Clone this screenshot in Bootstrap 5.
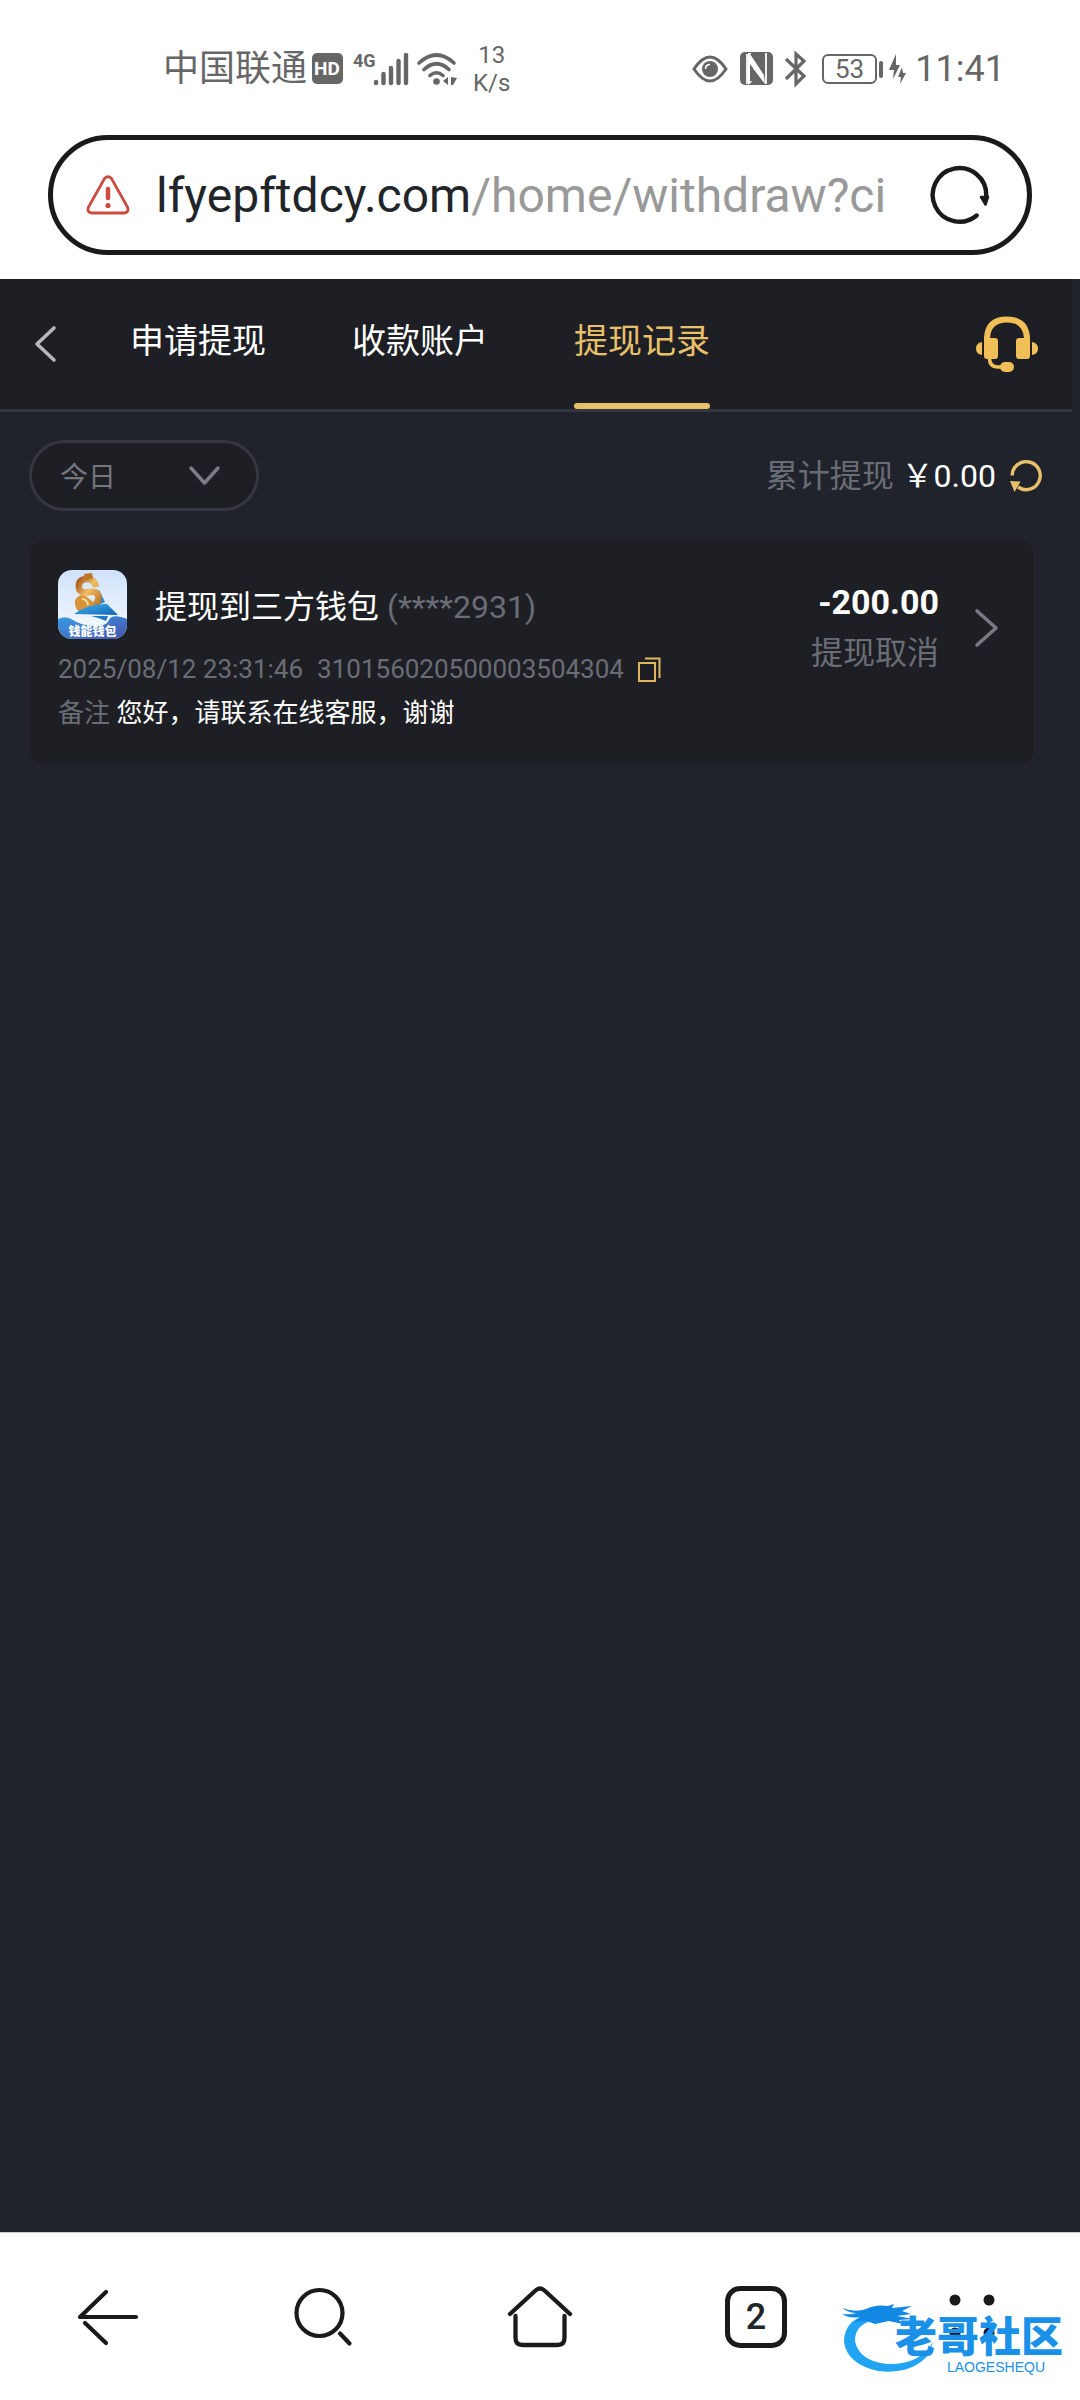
<!DOCTYPE html>
<html lang="zh-CN">
<head>
<meta charset="utf-8">
<meta name="viewport" content="width=device-width, initial-scale=1">
<title>提现记录</title>
<link href="https://cdn.jsdelivr.net/npm/bootstrap@5.3.0/dist/css/bootstrap.min.css" rel="stylesheet">
<style>
:root{--ink:#1a1a1a;--panel:#1e1f24;--page:#20232c;--line:#343741;--gold:#e9c06a;--dim:#6a6d75;--sys:#666}
body{font-family:Roboto,"Noto Sans CJK SC",sans-serif;background:#fff;color:var(--ink)}
svg{display:block;flex:none;overflow:visible}
button{color:inherit}
.statusbar{padding:46px 75px 0 163px;height:92px;color:var(--sys)}
.sys-icons{gap:12px}
.carrier{font-size:36px;line-height:46px;margin-right:5px}
.speed{font-size:24px;line-height:28px;margin-left:16px}
.clock{font-size:36px;line-height:46px}
.urlbar{margin:43px 48px 24px;height:120px;border:5px solid var(--ink);border-radius:60px;padding:0 37px 0 33px}
.urltext{font-size:48px;line-height:64px;margin:2px 26px 0}
.urlpath{color:#999}
.app{background:var(--page);padding-right:8px}
.apphead{background:var(--panel);border-bottom:3px solid var(--line);padding:0 34px 0 35px;height:133px}
.tabs-row{gap:86px;margin-left:74px}
.tab-item{font-size:34px;line-height:124px;color:#fff;text-decoration:none}
.tab-item::after{content:"";display:block;height:6px;border-radius:3px}
.tab-item.current{color:var(--gold)}
.tab-item.current::after{background:var(--gold)}
.toolbar{padding:28px 30px 30px 29px}
.picker{display:grid;width:230px;height:71px}
.picker>*{grid-area:1/1}
.picker select{appearance:none;background:var(--panel);border:3px solid var(--line);border-radius:36px;color:#73767d;font-size:28px;line-height:40px;padding:4px 28px 0;width:100%}
.picker svg{align-self:center;justify-self:end;margin-right:39px;pointer-events:none}
.total{font-size:32px;line-height:44px;gap:14px;color:#fff}
.dim{color:var(--dim)}
.record{background:var(--panel);border-radius:14px;margin:0 38px 0 29px;padding:29px 35px 29px 29px;color:#fff}
.record-title{font-size:32px;line-height:44px;margin:4px 0 0 28px}
.meta-rows{font-size:26px;line-height:44px;margin-top:8px}
.meta-line{gap:14px}
.outcome{font-size:32px;line-height:51px;margin-top:7px;gap:36px}
.amount{font-size:34px}
.bottomnav{height:168px;border-top:1px solid #ccc;background:#fff}
.tabcount{width:62px;height:62px;border:5px solid var(--ink);border-radius:15px;font-size:36px;font-weight:500;line-height:50px}
.brandmark{position:absolute;right:17px;bottom:26px;width:221px;height:70px;color:#1b90e8;pointer-events:none}
.brandmark svg{position:absolute;left:0;top:0}
.brandname{position:absolute;right:0;top:13px;font-size:42px;line-height:42px;font-weight:900}
.brandlatin{position:absolute;right:18px;top:56px;font:14px/14px "Liberation Sans",sans-serif}
</style>
</head>
<body class="d-flex flex-column min-vh-100 position-relative">

<div class="statusbar d-flex align-items-center justify-content-between">
  <div class="d-flex align-items-center">
    <span class="carrier">中国联通</span>
    <svg width="31" height="32" viewBox="0 0 31 32"><rect width="31" height="31" rx="5" fill="#666"/><text x="15" y="22" text-anchor="middle" font-family="Roboto,sans-serif" font-weight="700" font-size="19" fill="#fff">HD</text></svg>
    <svg class="ms-2" width="58" height="34" viewBox="0 0 58 34"><text x="2" y="15" font-family="Roboto,sans-serif" font-weight="700" font-size="18" fill="#666">4G</text><g stroke="#666" stroke-width="4.400" stroke-linecap="round"><path d="M25 30v1M32.500 22v9M40 16v15M47.500 9v22M55 3v28"/></g></svg>
    <svg class="ms-2" width="40" height="34" viewBox="0 0 40 34"><g fill="none" stroke="#666" stroke-width="3.600" stroke-linecap="round"><path d="M2 11Q19.500-5 37 11M7 17.500Q19.500 6 32 17.500M13 23.500Q19.500 18 26 23.500"/></g><circle cx="19.500" cy="29.500" r="3.300" fill="#666"/><path d="M31 25v8l-5-4zM34 25l6 1-4 7h-2z" fill="#666"/></svg>
    <span class="speed text-center">13<br>K/s</span>
  </div>
  <div class="sys-icons d-flex align-items-center">
    <svg width="36" height="28" viewBox="0 0 36 28"><path d="M2 14Q10 2 18 2t16 12Q26 26 18 26T2 14z" fill="none" stroke="#666" stroke-width="3"/><circle cx="18" cy="14" r="8" fill="#666"/><path d="M13.500 14q0-4.500 4.500-4.500" stroke="#fff" stroke-width="1.600" fill="none"/></svg>
    <svg width="33" height="34" viewBox="0 0 33 34"><rect width="33" height="33" rx="5" fill="#666"/><path d="M7 32V2M26 1v31" fill="none" stroke="#fff" stroke-width="1.800"/><path d="M8 1h3l13 22 1 9L12 15v15l-4 3z" fill="#fff"/><path d="M10 2l14 21V5L20 0zM10 12v17l3 1V16z" fill="#666"/></svg>
    <svg width="21" height="36" viewBox="0 0 21 36"><path d="M1 8l18 17-8 8V3l8 7L1 28" fill="none" stroke="#666" stroke-width="3.200"/></svg>
    <div class="d-flex align-items-center ps-1">
      <svg width="62" height="30" viewBox="0 0 62 30"><rect x="1" y="1" width="53" height="28" rx="5" fill="none" stroke="#666" stroke-width="2"/><rect x="57" y="7" width="4" height="17" rx="2" fill="#666"/><text x="27.500" y="24" text-anchor="middle" font-family="Roboto,sans-serif" font-size="26" fill="#666">53</text></svg>
      <svg class="ms-1" width="19" height="34" viewBox="0 0 19 34"><path d="M8 2L1 18h5l-1 9 7-14H8zM14 15l-4 10h3l-1 7 6-11h-3z" fill="#666"/></svg>
      <span class="clock ms-2">11:41</span>
    </div>
  </div>
</div>

<div class="urlbar d-flex align-items-center">
  <svg width="44" height="40" viewBox="0 0 44 40"><path d="M18.500 3.500q3.500-3.500 7 0L41.500 32q2 5.500-3.500 6H6q-5.500-.5-3.500-6z" fill="none" stroke="#cc4b3f" stroke-width="2.800"/><path d="M22 14v9" stroke="#cc4b3f" stroke-width="4.500" stroke-linecap="round"/><circle cx="22" cy="30.500" r="2.600" fill="#cc4b3f"/></svg>
  <button type="button" class="urltext btn p-0 border-0 rounded-0 flex-grow-1 text-start text-nowrap overflow-hidden" aria-label="地址栏">lfyepftdcy.com<span class="urlpath">/home/withdraw?ci</span></button>
  <button type="button" class="btn p-0 border-0" aria-label="刷新"><svg width="60" height="60" viewBox="0 0 60 60"><path d="M46.700 50.500A26.800 26.800 0 1 1 56.300 31" fill="none" stroke="#1a1a1a" stroke-width="4.400" stroke-linecap="round"/><path d="M51 32h7l-2.500 7.500z" fill="#1a1a1a" stroke="#1a1a1a" stroke-width="2.500" stroke-linejoin="round"/></svg></button>
</div>

<main class="app flex-grow-1">
  <header class="apphead d-flex align-items-center">
    <a href="#" aria-label="返回"><svg width="21" height="36" viewBox="0 0 21 36"><path d="M19 2L2 18l17 16" fill="none" stroke="#b6b8be" stroke-width="3.600" stroke-linecap="round" stroke-linejoin="round"/></svg></a>
    <nav class="tabs-row d-flex flex-grow-1">
      <a class="tab-item" href="#">申请提现</a>
      <a class="tab-item" href="#">收款账户</a>
      <a class="tab-item current" href="#" aria-current="page">提现记录</a>
    </nav>
    <button type="button" class="btn p-0 border-0" aria-label="客服"><svg width="62" height="56" viewBox="0 0 62 56"><g fill="#f0bf58"><path d="M6 26v13q-6-1-6-6.500T6 26zM56 26v13q6-1 6-6.500T56 26z"/><rect x="8" y="22" width="14" height="21" rx="3"/><rect x="40" y="22" width="14" height="21" rx="3"/><rect x="24" y="46" width="14" height="10" rx="5"/></g><path d="M11 25v-3Q12 3.500 31 3.500T51 22v3" fill="none" stroke="#f0bf58" stroke-width="6"/><path d="M13.500 42q0 9 8 9H28" fill="none" stroke="#f0bf58" stroke-width="3.600"/></svg></button>
  </header>

  <div class="toolbar d-flex align-items-center justify-content-between">
    <label class="picker" aria-label="日期">
      <select><option>今日</option><option>昨日</option></select>
      <svg width="31" height="20" viewBox="0 0 31 20"><path d="M2 2l13.500 15L29 2" fill="none" stroke="#7b7e85" stroke-width="3.400" stroke-linecap="round" stroke-linejoin="round"/></svg>
    </label>
    <div class="total d-flex align-items-center">
      <span><span class="dim">累计提现</span> ￥0.00</span>
      <button type="button" class="btn p-0 border-0" aria-label="刷新金额"><svg width="32" height="33" viewBox="0 0 32 33"><path d="M2.200 16.500A14 14 0 1 1 8 28" fill="none" stroke="#e9c06a" stroke-width="3.400"/><path d="M0 22l10.500.5L4.500 33z" fill="#e9c06a"/></svg></button>
    </div>
  </div>

  <article class="record d-flex align-items-start justify-content-between">
    <div>
      <div class="d-flex align-items-center">
        <svg width="69" height="69" viewBox="0 0 69 69" role="img" aria-label="钱能钱包">
          <defs>
            <clipPath id="logoClip"><rect width="69" height="69" rx="14"/></clipPath>
            <linearGradient id="sky" x2="0" y2="1"><stop stop-color="#cfe2fb"/><stop offset="1" stop-color="#f8fbff"/></linearGradient>
            <linearGradient id="sea" x2="1" y2="1"><stop stop-color="#3a9de6"/><stop offset="1" stop-color="#4653ad"/></linearGradient>
            <linearGradient id="coin" x2="1" y2="1"><stop stop-color="#a85b1c"/><stop offset=".45" stop-color="#f2bd63"/><stop offset="1" stop-color="#bd7625"/></linearGradient>
            <linearGradient id="sail" x2="1" y2="1"><stop stop-color="#3fb2ec"/><stop offset="1" stop-color="#1463b4"/></linearGradient>
          </defs>
          <g clip-path="url(#logoClip)">
            <rect width="69" height="69" fill="url(#sky)"/>
            <path d="M41 20l6 12-14 6z" fill="#2787cf"/>
            <path d="M17 30q6-8 12-3l10 8-3 6-14 1q-6-3-5-12z" fill="#d99339"/>
            <path d="M38 17Q36 8 28 9T21 18Q22 24 32 22T40 31Q37 38 29 36" fill="none" stroke="url(#coin)" stroke-width="6.500"/>
            <path d="M24 29q5 0 6 6" fill="none" stroke="#fae0a4" stroke-width="2"/>
            <path d="M26 4l8-1 1 5-8 2z" fill="#bd7625"/>
            <path d="M16 44Q31 33 49 34l11 11z" fill="url(#sail)"/>
            <path d="M33 46h17l-2 5q-6-3-15-5z" fill="#1e78c6"/>
            <path d="M0 49Q8 45 15 50T35 56 51 50 69 49V69H0z" fill="url(#sea)"/>
            <text x="34.500" y="66" text-anchor="middle" font-family="Noto Sans CJK SC,sans-serif" font-weight="900" font-size="12" fill="#fff">钱能钱包</text>
          </g>
        </svg>
        <div class="record-title">提现到三方钱包 <span class="dim">(****2931)</span></div>
      </div>
      <div class="meta-rows">
        <div class="meta-line dim d-flex align-items-center"><span>2025/08/12 23:31:46</span><span>310156020500003504304</span>
          <button type="button" class="btn p-0 border-0" aria-label="复制"><svg width="23" height="25" viewBox="0 0 23 25"><path d="M1 6h16v18H1zM7 1.500h14.500V21" fill="none" stroke="#e0b65f" stroke-width="2"/></svg></button>
        </div>
        <div><span class="dim">备注</span> 您好，请联系在线客服，谢谢</div>
      </div>
    </div>
    <div class="outcome d-flex align-items-center">
      <div class="text-end"><div class="amount fw-bold">-200.00</div><div class="dim">提现取消</div></div>
      <a href="#" aria-label="详情"><svg width="24" height="38" viewBox="0 0 24 38"><path d="M2 2l19 17L2 36" fill="none" stroke="#777a82" stroke-width="3.600" stroke-linecap="round" stroke-linejoin="round"/></svg></a>
    </div>
  </article>
</main>

<nav class="bottomnav row g-0 align-items-center" aria-label="浏览器">
  <div class="col d-flex justify-content-center"><button type="button" class="btn p-0 border-0" aria-label="后退"><svg width="62" height="56" viewBox="0 0 62 56"><path d="M29 3L3 28h56M8 34l21 20" fill="none" stroke="#1a1a1a" stroke-width="4.200" stroke-linecap="round" stroke-linejoin="round"/></svg></button></div>
  <div class="col d-flex justify-content-center"><button type="button" class="btn p-0 border-0" aria-label="搜索"><svg width="60" height="60" viewBox="0 0 60 60"><circle cx="25.500" cy="26" r="23" fill="none" stroke="#1a1a1a" stroke-width="4.200"/><path d="M46 46.500l9.500 10" stroke="#1a1a1a" stroke-width="4.200" stroke-linecap="round"/></svg></button></div>
  <div class="col d-flex justify-content-center"><button type="button" class="btn p-0 border-0" aria-label="主页"><svg width="66" height="62" viewBox="0 0 66 62"><path d="M3 28L28.500 4.500q4.500-4 9 0L63 28M8.500 30v22q0 7 7 7h35q7 0 7-7V30" fill="none" stroke="#1a1a1a" stroke-width="4.300" stroke-linecap="round"/></svg></button></div>
  <div class="col d-flex justify-content-center"><button type="button" class="btn p-0 tabcount" aria-label="标签页">2</button></div>
  <div class="col d-flex justify-content-center"><button type="button" class="btn p-0 border-0" aria-label="菜单"><svg width="46" height="46" viewBox="0 0 46 46" fill="#1a1a1a"><circle cx="6" cy="6" r="5.500"/><circle cx="40" cy="6" r="5.500"/><circle cx="6" cy="39" r="5.500"/><circle cx="40" cy="39" r="5.500"/></svg></button></div>
</nav>

<div class="brandmark">
  <svg width="96" height="70" viewBox="0 0 96 70"><path d="M24 11Q2 17 2 38Q5 60 36 67Q70 71 87 50L91 38Q78 61 45 60Q17 57 13 37Q13 18 36 16z" fill="#22a4f5"/><path d="M0 4q14 5 24 1q10-5 22-3l6-2-2 4 20-2-10 5 9 3-14 2 16 3-14 1 4 4-14-3-14 3-8-3-12 1 5-5q-10 2-18-3 10 1 14-1Q7 9 0 4z" fill="#1288e5"/></svg>
  <span class="brandname text-nowrap">老哥社区</span>
  <span class="brandlatin">LAOGESHEQU</span>
</div>

<script src="https://cdn.jsdelivr.net/npm/bootstrap@5.3.0/dist/js/bootstrap.bundle.min.js"></script>
</body>
</html>
